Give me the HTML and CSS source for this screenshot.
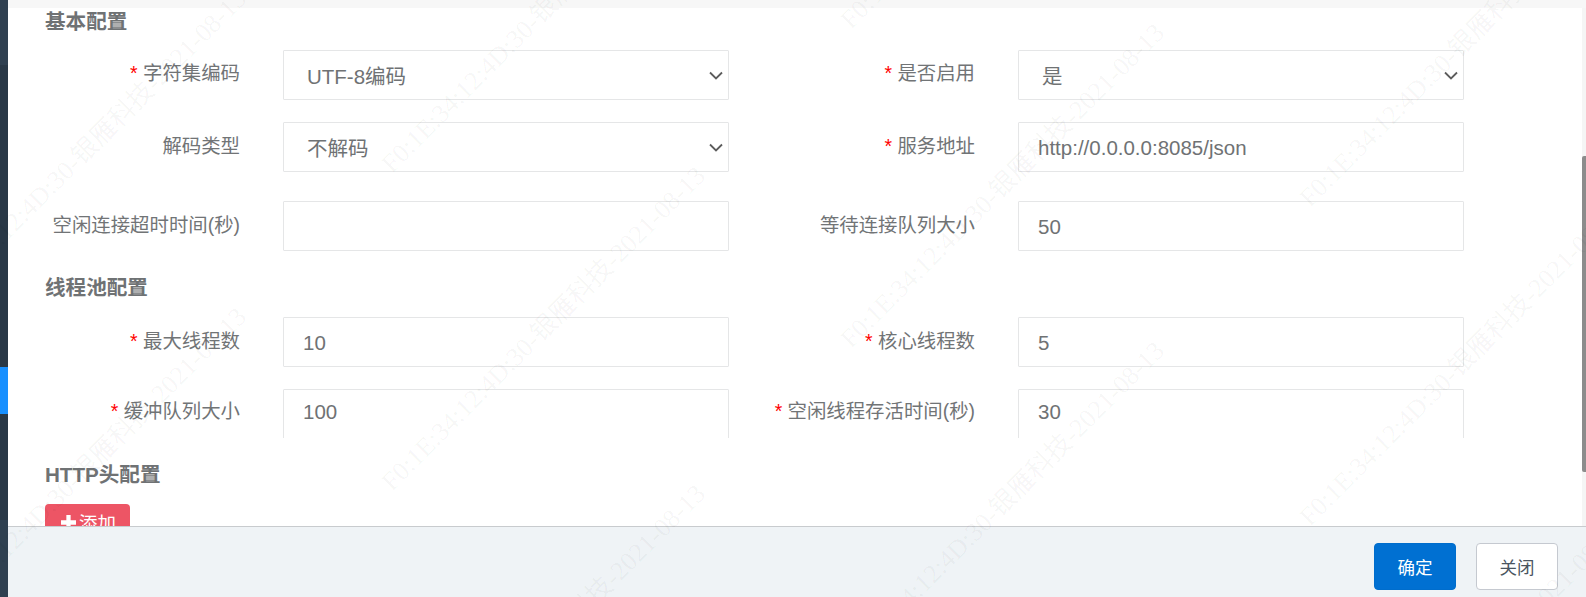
FILE: index.html
```html
<!DOCTYPE html>
<html lang="zh-CN">
<head>
<meta charset="utf-8">
<title>HTTP 服务配置</title>
<link rel="stylesheet" href="styles.css">
</head>
<body>
<div class="page">
  <aside class="sidebar">
    <div class="side-top"></div>
    <div class="side-mid"></div>
    <div class="side-active"></div>
    <div class="side-low"></div>
    <div class="side-end"></div>
  </aside>
  <main class="dialog">
    <div class="strip"></div>
    <div class="body-wrap">
      <form class="content">
        <h3 class="section first">基本配置</h3>
        <div class="row r1">
          <div class="field">
            <label class="label"><span class="req">*</span> 字符集编码</label>
            <div class="control"><select class="input select"><option>UTF-8编码</option></select><svg class="chev" viewBox="0 0 14 9"><path d="M1 1.5 7 7.5 13 1.5"/></svg></div>
          </div>
          <div class="field">
            <label class="label"><span class="req">*</span> 是否启用</label>
            <div class="control"><select class="input select"><option>是</option></select><svg class="chev" viewBox="0 0 14 9"><path d="M1 1.5 7 7.5 13 1.5"/></svg></div>
          </div>
        </div>
        <div class="row r2">
          <div class="field">
            <label class="label">解码类型</label>
            <div class="control"><select class="input select"><option>不解码</option></select><svg class="chev" viewBox="0 0 14 9"><path d="M1 1.5 7 7.5 13 1.5"/></svg></div>
          </div>
          <div class="field">
            <label class="label"><span class="req">*</span> 服务地址</label>
            <div class="control"><input class="input" value="http://0.0.0.0:8085/json"></div>
          </div>
        </div>
        <div class="row r3">
          <div class="field">
            <label class="label">空闲连接超时时间(秒)</label>
            <div class="control"><input class="input" value=""></div>
          </div>
          <div class="field">
            <label class="label">等待连接队列大小</label>
            <div class="control"><input class="input" value="50"></div>
          </div>
        </div>
        <h3 class="section second">线程池配置</h3>
        <div class="row r4">
          <div class="field">
            <label class="label"><span class="req">*</span> 最大线程数</label>
            <div class="control"><input class="input" value="10"></div>
          </div>
          <div class="field">
            <label class="label"><span class="req">*</span> 核心线程数</label>
            <div class="control"><input class="input" value="5"></div>
          </div>
        </div>
        <div class="row r5">
          <div class="field">
            <label class="label"><span class="req">*</span> 缓冲队列大小</label>
            <div class="control"><input class="input" value="100"></div>
          </div>
          <div class="field">
            <label class="label"><span class="req">*</span> 空闲线程存活时间(秒)</label>
            <div class="control"><input class="input" value="30"></div>
          </div>
        </div>
        <h3 class="section third">HTTP头配置</h3>
        <button type="button" class="add"><svg class="plus" viewBox="0 0 14 14"><path d="M5 0h4v5h5v4H9v5H5V9H0V5h5z"/></svg>添加</button>
      </form>
      <div class="scrollbar"><div class="thumb"></div></div>
    </div>
    <footer class="footer">
      <button type="button" class="btn primary">确定</button>
      <button type="button" class="btn plain">关闭</button>
    </footer>
  </main>
  <svg class="watermark" width="1586" height="597">
    <text x="-67" y="315" transform="rotate(-45 -67 315)">F0:1E:34:12:4D:30-银雁科技-2021-08-13</text>
    <text x="-67" y="633" transform="rotate(-45 -67 633)">F0:1E:34:12:4D:30-银雁科技-2021-08-13</text>
    <text x="392" y="174" transform="rotate(-45 392 174)">F0:1E:34:12:4D:30-银雁科技-2021-08-13</text>
    <text x="392" y="492" transform="rotate(-45 392 492)">F0:1E:34:12:4D:30-银雁科技-2021-08-13</text>
    <text x="392" y="810" transform="rotate(-45 392 810)">F0:1E:34:12:4D:30-银雁科技-2021-08-13</text>
    <text x="851" y="30" transform="rotate(-45 851 30)">F0:1E:34:12:4D:30-银雁科技-2021-08-13</text>
    <text x="851" y="349" transform="rotate(-45 851 349)">F0:1E:34:12:4D:30-银雁科技-2021-08-13</text>
    <text x="851" y="667" transform="rotate(-45 851 667)">F0:1E:34:12:4D:30-银雁科技-2021-08-13</text>
    <text x="1310" y="208" transform="rotate(-45 1310 208)">F0:1E:34:12:4D:30-银雁科技-2021-08-13</text>
    <text x="1310" y="527" transform="rotate(-45 1310 527)">F0:1E:34:12:4D:30-银雁科技-2021-08-13</text>
    <text x="1310" y="845" transform="rotate(-45 1310 845)">F0:1E:34:12:4D:30-银雁科技-2021-08-13</text>
  </svg>
</div>
</body>
</html>
```

FILE: styles.css
```css
* { box-sizing: border-box; }
html, body { margin: 0; height: 100%; overflow: hidden; background: #fff; }
body { font-family: "Liberation Sans", "Noto Sans CJK SC", sans-serif; color: #676a6c; }

.page { position: relative; display: flex; width: 1586px; height: 597px; overflow: hidden; }

.sidebar { flex: 0 0 8px; display: flex; flex-direction: column; background: #293846; }
.side-top { height: 65px; background: #2f4050; }
.side-mid { height: 302px; background: #293846; }
.side-active { height: 47px; background: #1890ff; }
.side-low { height: 106px; background: #293846; }
.side-end { flex: 1; background: #2f4050; }

.dialog { flex: 1; min-width: 0; display: flex; flex-direction: column; }
.strip { flex: 0 0 8px; background: #f7f7f7; }
.body-wrap { flex: 1; min-height: 0; display: flex; overflow: hidden; background: #fff; }
.content { flex: 1; min-width: 0; padding-left: 37px; overflow: hidden; }

.section { margin: 0; font-size: 20.6px; line-height: 24px; font-weight: 700; color: #6f7274; }
.section.first { margin-top: 2px; }
.section.second { margin-top: 25px; }
.section.third { margin-top: 25px; }

.row { display: flex; height: 50px; overflow: hidden; }
.r1 { margin-top: 16px; }
.r2 { margin-top: 22px; }
.r3 { margin-top: 29px; }
.r4 { margin-top: 17px; }
.r5 { height: 49px; margin-top: 22px; }

.field { flex: 0 0 735px; display: flex; align-items: flex-start; }
.label { flex: 0 0 215px; min-width: 0; margin: 0 43px 0 -20px; padding-top: 11px; text-align: right; font-size: 19.4px; line-height: 26px; white-space: nowrap; color: #717476; }
.r1 .label { padding-top: 10px; }
.r5 .label { padding-top: 9px; }
.req { color: #f00; }
.control { position: relative; flex: 0 0 446px; height: 50px; }

.input { display: block; width: 100%; height: 50px; padding: 2px 19px 0; border: 1px solid #e5e6e7; border-radius: 1px; background: #fff; color: #6f7274; font: 20.5px "Liberation Sans", "Noto Sans CJK SC", sans-serif; outline: none; }
.r5 .input { padding: 0 19px 4px; }
.select { appearance: none; -webkit-appearance: none; padding-left: 23px; }
.chev { position: absolute; top: 21px; right: 6px; width: 14px; height: 9px; pointer-events: none; }
.chev path { fill: none; stroke: #5c5c5c; stroke-width: 1.8; }

.add { display: flex; align-items: center; gap: 3px; width: 85px; height: 36px; margin-top: 17px; padding: 0 0 0 16px; border: 0; border-radius: 4px; background: #ed5565; color: #fff; font: 18.5px "Liberation Sans", "Noto Sans CJK SC", sans-serif; }
.plus { flex: 0 0 15px; width: 15px; height: 15px; fill: #fff; }

.scrollbar { flex: 0 0 4px; padding-top: 148px; background: #f5f5f5; }
.thumb { height: 316px; border-radius: 2px 0 0 2px; background: #8c8c8c; }

.footer { flex: 0 0 71px; display: flex; justify-content: flex-end; align-items: flex-start; gap: 20px; padding: 16px 28px 0 0; border-top: 1px solid #c8cbce; background: #eff3f6; }
.btn { width: 82px; height: 47px; border-radius: 4px; font: 17.5px "Liberation Sans", "Noto Sans CJK SC", sans-serif; }
.primary { border: 1px solid #006dcc; background: #0070d2; color: #fff; }
.plain { border: 1px solid #c5c9d0; background: #fff; color: #4a5560; }

.watermark { position: absolute; left: 0; top: 0; pointer-events: none; }
.watermark text { font: 26px "Liberation Serif", "Noto Sans CJK SC", serif; fill: #000; fill-opacity: .045; }
```
